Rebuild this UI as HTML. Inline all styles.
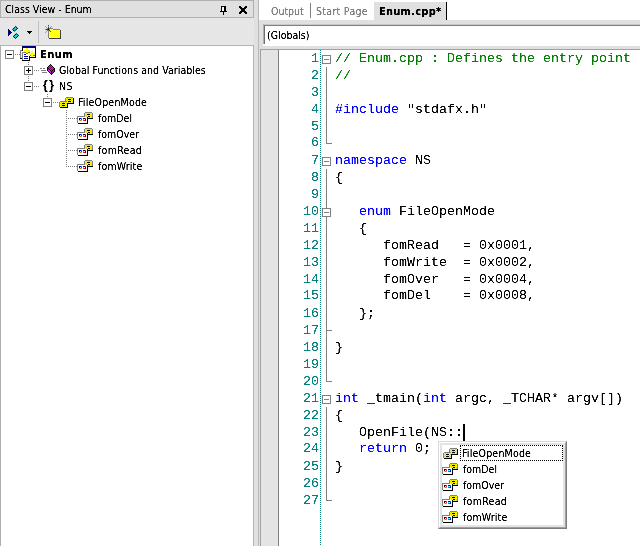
<!DOCTYPE html>
<html><head><meta charset="utf-8"><title>Enum</title>
<style>
html,body{margin:0;padding:0;}
body{width:640px;height:546px;overflow:hidden;background:#e0e0e0;position:relative;font-family:"DejaVu Sans Condensed","Liberation Sans",sans-serif;font-size:10.5px;color:#000;}
.abs{position:absolute;}
#w{position:absolute;left:0;top:0;width:640px;height:546px;will-change:transform;}
.row,.tab,.pi,#title span,#atab span,#combo span{filter:url(#ts);}
pre{filter:url(#th);}
#title{left:0;top:0;width:252px;height:16px;border:1px solid #b0b0b0;background:#e0e0e0;}
#title span{position:absolute;left:4px;top:1px;line-height:14px;white-space:nowrap;}
#toolbar{left:0;top:18px;width:254px;height:27px;background:#e6e6e6;}
#tree{left:1px;top:46px;width:252px;height:500px;background:#fff;}
#treetop{left:0;top:45px;width:254px;height:1px;background:#b4b4b4;}
#treeright{left:253px;top:45px;width:1px;height:501px;background:#b4b4b4;}
#lborder{left:0;top:45px;width:1px;height:501px;background:#b0b0b0;}
.row{position:absolute;height:16px;line-height:16px;white-space:nowrap;}
.box{position:absolute;width:7px;height:7px;border:1px solid #808080;background:#fff;}
.box i{position:absolute;left:1px;top:3px;width:5px;height:1px;background:#000;}
.box b{position:absolute;left:3px;top:1px;width:1px;height:5px;background:#000;}
.fbox{position:absolute;width:7px;height:7px;border:1px solid #808080;background:#fff;}
.fbox i{position:absolute;left:1px;top:3px;width:5px;height:1px;background:#808080;}
.fl{position:absolute;background:#808080;}
.hd{position:absolute;height:1px;background-image:repeating-linear-gradient(90deg,#808080 0 1px,transparent 1px 2px);}
.vd{position:absolute;width:1px;background-image:repeating-linear-gradient(180deg,#808080 0 1px,transparent 1px 2px);}
#split{left:254px;top:0;width:4px;height:546px;background:#e0e0e0;}
#splitline{left:258px;top:0;width:1px;height:546px;background:#b8b8b8;}
#tabs{left:259px;top:0;width:381px;height:20px;background:#fff;}
.tab{position:absolute;top:4px;line-height:14px;color:#808080;white-space:nowrap;}
#atab{left:374px;top:2px;width:72px;height:18px;background:#e0e0e0;border-right:1px solid #000;box-sizing:content-box;}
#atab span{position:absolute;left:5px;top:3px;letter-spacing:0.25px;line-height:14px;font-weight:bold;font-size:11px;color:#000;white-space:nowrap;}
#combo{left:263px;top:24px;width:377px;height:22px;background:#fff;}
#combo:before{content:"";position:absolute;left:0;top:0;right:0;bottom:2px;border-top:1px solid #c8c8c8;border-left:1px solid #b0b0b0;}
#combo:after{content:"";position:absolute;left:1px;top:1px;right:0;bottom:2px;border-top:1px solid #808080;border-left:1px solid #707070;}
#combo span{position:absolute;left:4px;top:4px;line-height:14px;white-space:nowrap;}
#code{left:260px;top:49px;width:380px;height:497px;background:#fff;border-top:1px solid #a0a0a0;border-left:1px solid #a0a0a0;box-sizing:border-box;}
#margin{left:261px;top:50px;width:17px;height:496px;background:#e4e4e4;border-right:1px solid #808080;}
pre{margin:0;font-family:"Liberation Mono","DejaVu Sans Mono",monospace;font-size:13.33px;line-height:18.8889px;transform:scaleY(0.9);transform-origin:0 0;}
#nums{left:278px;top:51px;width:41px;text-align:right;color:#008080;}
#src{left:335px;top:51px;color:#000;}
.k{color:#0000ff}.c{color:#008000}
#dot{left:320px;top:50px;width:1px;height:496px;background-image:repeating-linear-gradient(180deg,#008080 0 1px,transparent 1px 2px);}
#caret{left:463px;top:424px;width:2px;height:17px;background:#000;}
#popup{left:438px;top:441px;width:129px;height:88px;box-sizing:border-box;background:#fff;border:1px solid #d8d8d8;border-right-color:#7c7c7c;border-bottom-color:#7c7c7c;}
#popup:before{content:"";position:absolute;left:0;top:0;right:0;bottom:0;border:1px solid #fff;border-right-color:#a0a0a0;border-bottom-color:#a0a0a0;}
#popup:after{content:"";position:absolute;left:1px;top:1px;right:1px;bottom:1px;border:2px solid #e4e4e4;}
.pi{position:absolute;left:463px;height:16px;line-height:16px;white-space:nowrap;}
#focus{left:460px;top:445px;width:103px;height:16px;box-sizing:border-box;border:1px dotted #000;}
svg{position:absolute;overflow:visible;shape-rendering:crispEdges;}
</style></head><body>
<svg width="0" height="0" style="position:absolute;left:0;top:0"><filter id="th" x="0" y="0" width="1" height="1" color-interpolation-filters="sRGB"><feComponentTransfer><feFuncA type="table" tableValues="0 0 0.7 1 1"/></feComponentTransfer></filter><filter id="ts" x="0" y="0" width="1" height="1" color-interpolation-filters="sRGB"><feComponentTransfer><feFuncA type="table" tableValues="0 0.1 0.8 1 1"/></feComponentTransfer></filter></svg>
<div id="w">
<div id="toolbar" class="abs"></div>
<div id="title" class="abs"><span>Class View - Enum</span></div>
<div id="lborder" class="abs"></div>
<div id="treetop" class="abs"></div>
<div id="tree" class="abs"></div>
<div id="treeright" class="abs"></div>

<svg style="left:220px;top:6px" width="7" height="9" viewBox="0 0 7 9"><rect x="1" y="0" width="5" height="1" fill="#000"/><rect x="1" y="1" width="1" height="1" fill="#000"/><rect x="2" y="1" width="2" height="1" fill="#fff"/><rect x="4" y="1" width="2" height="1" fill="#000"/><rect x="1" y="2" width="1" height="1" fill="#000"/><rect x="2" y="2" width="2" height="1" fill="#fff"/><rect x="4" y="2" width="2" height="1" fill="#000"/><rect x="1" y="3" width="1" height="1" fill="#000"/><rect x="2" y="3" width="2" height="1" fill="#fff"/><rect x="4" y="3" width="2" height="1" fill="#000"/><rect x="1" y="4" width="1" height="1" fill="#000"/><rect x="2" y="4" width="2" height="1" fill="#fff"/><rect x="4" y="4" width="2" height="1" fill="#000"/><rect x="0" y="5" width="7" height="1" fill="#000"/><rect x="3" y="6" width="1" height="1" fill="#000"/><rect x="3" y="7" width="1" height="1" fill="#000"/><rect x="3" y="8" width="1" height="1" fill="#000"/></svg>
<svg style="left:239px;top:6px" width="8" height="8" viewBox="0 0 8 8"><rect x="0" y="0" width="2" height="1" fill="#000"/><rect x="6" y="0" width="2" height="1" fill="#000"/><rect x="0" y="1" width="3" height="1" fill="#000"/><rect x="5" y="1" width="3" height="1" fill="#000"/><rect x="1" y="2" width="6" height="1" fill="#000"/><rect x="2" y="3" width="4" height="1" fill="#000"/><rect x="2" y="4" width="4" height="1" fill="#000"/><rect x="1" y="5" width="6" height="1" fill="#000"/><rect x="0" y="6" width="3" height="1" fill="#000"/><rect x="5" y="6" width="3" height="1" fill="#000"/><rect x="0" y="7" width="2" height="1" fill="#000"/><rect x="6" y="7" width="2" height="1" fill="#000"/></svg>
<svg style="left:8px;top:29px" width="4" height="7" viewBox="0 0 4 7"><rect x="0" y="0" width="1" height="1" fill="#000080"/><rect x="0" y="1" width="2" height="1" fill="#000080"/><rect x="0" y="2" width="3" height="1" fill="#000080"/><rect x="0" y="3" width="4" height="1" fill="#000080"/><rect x="0" y="4" width="3" height="1" fill="#000080"/><rect x="0" y="5" width="2" height="1" fill="#000080"/><rect x="0" y="6" width="1" height="1" fill="#000080"/></svg>
<svg style="left:0;top:0;shape-rendering:auto" width="40" height="46"><polygon points="15.7,26.5 17.6,28.4 14.3,31.2 12.6,29.5" fill="#00e0e8" stroke="#000" stroke-width="1"/><polygon points="16.3,33.6 18.6,35.6 15.5,38.4 13.3,36.5" fill="#00e0e8" stroke="#000" stroke-width="1"/></svg>
<svg style="left:27px;top:31px" width="5" height="3" viewBox="0 0 5 3"><rect x="0" y="0" width="5" height="1" fill="#000"/><rect x="1" y="1" width="3" height="1" fill="#000"/><rect x="2" y="2" width="1" height="1" fill="#000"/></svg>
<div class="abs" style="left:38px;top:21px;width:1px;height:22px;background:#c0c0c0"></div>
<svg style="left:45px;top:25px" width="16" height="14" viewBox="0 0 16 14"><rect x="3" y="0" width="1" height="1" fill="#404040"/><rect x="0" y="1" width="1" height="1" fill="#a0a0a0"/><rect x="3" y="1" width="1" height="1" fill="#a0a0a0"/><rect x="6" y="1" width="1" height="1" fill="#a0a0a0"/><rect x="1" y="2" width="1" height="1" fill="#a0a0a0"/><rect x="3" y="2" width="1" height="1" fill="#404040"/><rect x="5" y="2" width="1" height="1" fill="#808080"/><rect x="2" y="3" width="1" height="1" fill="#808080"/><rect x="3" y="3" width="1" height="1" fill="#404040"/><rect x="4" y="3" width="4" height="1" fill="#808080"/><rect x="0" y="4" width="1" height="1" fill="#808080"/><rect x="1" y="4" width="2" height="1" fill="#404040"/><rect x="3" y="4" width="1" height="1" fill="#000"/><rect x="4" y="4" width="1" height="1" fill="#808080"/><rect x="5" y="4" width="1" height="1" fill="#fff"/><rect x="6" y="4" width="1" height="1" fill="#ffff00"/><rect x="7" y="4" width="1" height="1" fill="#fff"/><rect x="8" y="4" width="7" height="1" fill="#808080"/><rect x="2" y="5" width="2" height="1" fill="#808080"/><rect x="4" y="5" width="1" height="1" fill="#404040"/><rect x="5" y="5" width="1" height="1" fill="#ffff00"/><rect x="6" y="5" width="1" height="1" fill="#fff"/><rect x="7" y="5" width="1" height="1" fill="#ffff00"/><rect x="8" y="5" width="1" height="1" fill="#fff"/><rect x="9" y="5" width="1" height="1" fill="#ffff00"/><rect x="10" y="5" width="1" height="1" fill="#fff"/><rect x="11" y="5" width="1" height="1" fill="#ffff00"/><rect x="12" y="5" width="1" height="1" fill="#fff"/><rect x="13" y="5" width="1" height="1" fill="#ffff00"/><rect x="14" y="5" width="1" height="1" fill="#fff"/><rect x="15" y="5" width="1" height="1" fill="#404040"/><rect x="1" y="6" width="1" height="1" fill="#a0a0a0"/><rect x="3" y="6" width="1" height="1" fill="#808080"/><rect x="4" y="6" width="1" height="1" fill="#ffff00"/><rect x="5" y="6" width="1" height="1" fill="#404040"/><rect x="6" y="6" width="1" height="1" fill="#ffff00"/><rect x="7" y="6" width="1" height="1" fill="#fff"/><rect x="8" y="6" width="1" height="1" fill="#ffff00"/><rect x="9" y="6" width="1" height="1" fill="#fff"/><rect x="10" y="6" width="1" height="1" fill="#ffff00"/><rect x="11" y="6" width="1" height="1" fill="#fff"/><rect x="12" y="6" width="1" height="1" fill="#ffff00"/><rect x="13" y="6" width="1" height="1" fill="#fff"/><rect x="14" y="6" width="1" height="1" fill="#ffff00"/><rect x="15" y="6" width="1" height="1" fill="#404040"/><rect x="0" y="7" width="1" height="1" fill="#a0a0a0"/><rect x="3" y="7" width="1" height="1" fill="#808080"/><rect x="4" y="7" width="1" height="1" fill="#fff"/><rect x="5" y="7" width="1" height="1" fill="#ffff00"/><rect x="6" y="7" width="1" height="1" fill="#fff"/><rect x="7" y="7" width="1" height="1" fill="#ffff00"/><rect x="8" y="7" width="1" height="1" fill="#fff"/><rect x="9" y="7" width="1" height="1" fill="#ffff00"/><rect x="10" y="7" width="1" height="1" fill="#fff"/><rect x="11" y="7" width="1" height="1" fill="#ffff00"/><rect x="12" y="7" width="1" height="1" fill="#fff"/><rect x="13" y="7" width="1" height="1" fill="#ffff00"/><rect x="14" y="7" width="1" height="1" fill="#fff"/><rect x="15" y="7" width="1" height="1" fill="#404040"/><rect x="3" y="8" width="1" height="1" fill="#808080"/><rect x="4" y="8" width="1" height="1" fill="#ffff00"/><rect x="5" y="8" width="1" height="1" fill="#fff"/><rect x="6" y="8" width="1" height="1" fill="#ffff00"/><rect x="7" y="8" width="1" height="1" fill="#fff"/><rect x="8" y="8" width="1" height="1" fill="#ffff00"/><rect x="9" y="8" width="1" height="1" fill="#fff"/><rect x="10" y="8" width="1" height="1" fill="#ffff00"/><rect x="11" y="8" width="1" height="1" fill="#fff"/><rect x="12" y="8" width="1" height="1" fill="#ffff00"/><rect x="13" y="8" width="1" height="1" fill="#fff"/><rect x="14" y="8" width="1" height="1" fill="#ffff00"/><rect x="15" y="8" width="1" height="1" fill="#404040"/><rect x="3" y="9" width="1" height="1" fill="#808080"/><rect x="4" y="9" width="1" height="1" fill="#fff"/><rect x="5" y="9" width="1" height="1" fill="#ffff00"/><rect x="6" y="9" width="1" height="1" fill="#fff"/><rect x="7" y="9" width="1" height="1" fill="#ffff00"/><rect x="8" y="9" width="1" height="1" fill="#fff"/><rect x="9" y="9" width="1" height="1" fill="#ffff00"/><rect x="10" y="9" width="1" height="1" fill="#fff"/><rect x="11" y="9" width="1" height="1" fill="#ffff00"/><rect x="12" y="9" width="1" height="1" fill="#fff"/><rect x="13" y="9" width="1" height="1" fill="#ffff00"/><rect x="14" y="9" width="1" height="1" fill="#fff"/><rect x="15" y="9" width="1" height="1" fill="#404040"/><rect x="3" y="10" width="1" height="1" fill="#808080"/><rect x="4" y="10" width="1" height="1" fill="#ffff00"/><rect x="5" y="10" width="1" height="1" fill="#fff"/><rect x="6" y="10" width="1" height="1" fill="#ffff00"/><rect x="7" y="10" width="1" height="1" fill="#fff"/><rect x="8" y="10" width="1" height="1" fill="#ffff00"/><rect x="9" y="10" width="1" height="1" fill="#fff"/><rect x="10" y="10" width="1" height="1" fill="#ffff00"/><rect x="11" y="10" width="1" height="1" fill="#fff"/><rect x="12" y="10" width="1" height="1" fill="#ffff00"/><rect x="13" y="10" width="1" height="1" fill="#fff"/><rect x="14" y="10" width="1" height="1" fill="#ffff00"/><rect x="15" y="10" width="1" height="1" fill="#404040"/><rect x="3" y="11" width="1" height="1" fill="#808080"/><rect x="4" y="11" width="1" height="1" fill="#fff"/><rect x="5" y="11" width="1" height="1" fill="#ffff00"/><rect x="6" y="11" width="1" height="1" fill="#fff"/><rect x="7" y="11" width="1" height="1" fill="#ffff00"/><rect x="8" y="11" width="1" height="1" fill="#fff"/><rect x="9" y="11" width="1" height="1" fill="#ffff00"/><rect x="10" y="11" width="1" height="1" fill="#fff"/><rect x="11" y="11" width="1" height="1" fill="#ffff00"/><rect x="12" y="11" width="1" height="1" fill="#fff"/><rect x="13" y="11" width="1" height="1" fill="#ffff00"/><rect x="14" y="11" width="1" height="1" fill="#fff"/><rect x="15" y="11" width="1" height="1" fill="#404040"/><rect x="3" y="12" width="1" height="1" fill="#808080"/><rect x="4" y="12" width="1" height="1" fill="#ffff00"/><rect x="5" y="12" width="1" height="1" fill="#fff"/><rect x="6" y="12" width="1" height="1" fill="#ffff00"/><rect x="7" y="12" width="1" height="1" fill="#fff"/><rect x="8" y="12" width="1" height="1" fill="#ffff00"/><rect x="9" y="12" width="1" height="1" fill="#fff"/><rect x="10" y="12" width="1" height="1" fill="#ffff00"/><rect x="11" y="12" width="1" height="1" fill="#fff"/><rect x="12" y="12" width="1" height="1" fill="#ffff00"/><rect x="13" y="12" width="1" height="1" fill="#fff"/><rect x="14" y="12" width="1" height="1" fill="#ffff00"/><rect x="15" y="12" width="1" height="1" fill="#404040"/><rect x="4" y="13" width="12" height="1" fill="#404040"/></svg>

<div class="hd" style="left:15px;top:54px;width:5px"></div>
<div class="vd" style="left:28px;top:62px;height:20px"></div>
<div class="hd" style="left:34px;top:70px;width:5px"></div>
<div class="hd" style="left:34px;top:86px;width:5px"></div>
<div class="vd" style="left:47px;top:94px;height:4px"></div>
<div class="hd" style="left:53px;top:102px;width:5px"></div>
<div class="vd" style="left:66px;top:110px;height:57px"></div>
<div class="hd" style="left:66px;top:118px;width:11px"></div>
<div class="hd" style="left:66px;top:134px;width:11px"></div>
<div class="hd" style="left:66px;top:150px;width:11px"></div>
<div class="hd" style="left:66px;top:166px;width:11px"></div>

<div class="box" style="left:5px;top:50px"><i></i></div><div class="box" style="left:24px;top:66px"><i></i><b></b></div><div class="box" style="left:24px;top:82px"><i></i></div><div class="box" style="left:43px;top:98px"><i></i></div>
<svg style="left:20px;top:46px" width="16" height="15" viewBox="0 0 16 15"><rect x="2" y="0" width="14" height="1" fill="#000080"/><rect x="2" y="1" width="14" height="1" fill="#000080"/><rect x="2" y="2" width="1" height="1" fill="#000"/><rect x="3" y="2" width="3" height="1" fill="#fff"/><rect x="6" y="2" width="2" height="1" fill="#ffff00"/><rect x="8" y="2" width="7" height="1" fill="#fff"/><rect x="15" y="2" width="1" height="1" fill="#000"/><rect x="2" y="3" width="1" height="1" fill="#000"/><rect x="3" y="3" width="3" height="1" fill="#fff"/><rect x="6" y="3" width="2" height="1" fill="#ffff00"/><rect x="8" y="3" width="7" height="1" fill="#fff"/><rect x="15" y="3" width="1" height="1" fill="#000"/><rect x="0" y="4" width="2" height="1" fill="#808080"/><rect x="2" y="4" width="1" height="1" fill="#000"/><rect x="3" y="4" width="1" height="1" fill="#fff"/><rect x="4" y="4" width="6" height="1" fill="#ffff00"/><rect x="10" y="4" width="5" height="1" fill="#fff"/><rect x="15" y="4" width="1" height="1" fill="#000"/><rect x="0" y="5" width="1" height="1" fill="#808080"/><rect x="1" y="5" width="1" height="1" fill="#ffff00"/><rect x="2" y="5" width="2" height="1" fill="#fff"/><rect x="4" y="5" width="6" height="1" fill="#ffff00"/><rect x="10" y="5" width="1" height="1" fill="#fff"/><rect x="11" y="5" width="2" height="1" fill="#ffff00"/><rect x="13" y="5" width="2" height="1" fill="#fff"/><rect x="15" y="5" width="1" height="1" fill="#000"/><rect x="0" y="6" width="1" height="1" fill="#808080"/><rect x="1" y="6" width="1" height="1" fill="#fff"/><rect x="2" y="6" width="3" height="1" fill="#808080"/><rect x="5" y="6" width="1" height="1" fill="#808000"/><rect x="6" y="6" width="2" height="1" fill="#ffff00"/><rect x="8" y="6" width="2" height="1" fill="#808000"/><rect x="10" y="6" width="1" height="1" fill="#fff"/><rect x="11" y="6" width="2" height="1" fill="#ffff00"/><rect x="13" y="6" width="2" height="1" fill="#fff"/><rect x="15" y="6" width="1" height="1" fill="#000"/><rect x="0" y="7" width="1" height="1" fill="#808080"/><rect x="1" y="7" width="1" height="1" fill="#ffff00"/><rect x="2" y="7" width="1" height="1" fill="#808080"/><rect x="3" y="7" width="3" height="1" fill="#fff"/><rect x="6" y="7" width="2" height="1" fill="#808000"/><rect x="8" y="7" width="1" height="1" fill="#fff"/><rect x="9" y="7" width="6" height="1" fill="#ffff00"/><rect x="15" y="7" width="1" height="1" fill="#000"/><rect x="0" y="8" width="1" height="1" fill="#808080"/><rect x="1" y="8" width="1" height="1" fill="#fff"/><rect x="2" y="8" width="1" height="1" fill="#808080"/><rect x="3" y="8" width="1" height="1" fill="#fff"/><rect x="4" y="8" width="2" height="1" fill="#0000a0"/><rect x="6" y="8" width="3" height="1" fill="#fff"/><rect x="9" y="8" width="6" height="1" fill="#ffff00"/><rect x="15" y="8" width="1" height="1" fill="#000"/><rect x="0" y="9" width="1" height="1" fill="#808080"/><rect x="1" y="9" width="1" height="1" fill="#ffff00"/><rect x="2" y="9" width="1" height="1" fill="#808080"/><rect x="3" y="9" width="7" height="1" fill="#fff"/><rect x="10" y="9" width="1" height="1" fill="#808000"/><rect x="11" y="9" width="2" height="1" fill="#ffff00"/><rect x="13" y="9" width="2" height="1" fill="#808000"/><rect x="15" y="9" width="1" height="1" fill="#000"/><rect x="0" y="10" width="1" height="1" fill="#808080"/><rect x="1" y="10" width="1" height="1" fill="#fff"/><rect x="2" y="10" width="1" height="1" fill="#808080"/><rect x="3" y="10" width="1" height="1" fill="#fff"/><rect x="4" y="10" width="4" height="1" fill="#0000a0"/><rect x="8" y="10" width="1" height="1" fill="#fff"/><rect x="9" y="10" width="1" height="1" fill="#000"/><rect x="10" y="10" width="1" height="1" fill="#fff"/><rect x="11" y="10" width="2" height="1" fill="#ffff00"/><rect x="13" y="10" width="2" height="1" fill="#fff"/><rect x="15" y="10" width="1" height="1" fill="#000"/><rect x="0" y="11" width="1" height="1" fill="#808080"/><rect x="1" y="11" width="1" height="1" fill="#ffff00"/><rect x="2" y="11" width="1" height="1" fill="#808080"/><rect x="3" y="11" width="6" height="1" fill="#fff"/><rect x="9" y="11" width="7" height="1" fill="#000"/><rect x="0" y="12" width="2" height="1" fill="#000"/><rect x="2" y="12" width="1" height="1" fill="#808080"/><rect x="3" y="12" width="1" height="1" fill="#fff"/><rect x="4" y="12" width="4" height="1" fill="#0000a0"/><rect x="8" y="12" width="1" height="1" fill="#fff"/><rect x="9" y="12" width="1" height="1" fill="#000"/><rect x="2" y="13" width="1" height="1" fill="#808080"/><rect x="3" y="13" width="6" height="1" fill="#fff"/><rect x="9" y="13" width="1" height="1" fill="#000"/><rect x="2" y="14" width="8" height="1" fill="#000"/></svg>
<div class="hd" style="left:40px;top:68px;width:1px"></div>
<svg style="left:40px;top:68px" width="7" height="5" viewBox="0 0 7 5"><rect x="0" y="0" width="2" height="1" fill="#808080"/><rect x="3" y="0" width="2" height="1" fill="#808080"/><rect x="1" y="2" width="5" height="1" fill="#808080"/><rect x="2" y="4" width="5" height="1" fill="#808080"/></svg>
<svg style="left:47px;top:64px" width="8" height="11" viewBox="0 0 8 11"><rect x="3" y="0" width="1" height="1" fill="#000"/><rect x="2" y="1" width="1" height="1" fill="#000"/><rect x="3" y="1" width="1" height="1" fill="#ff00ff"/><rect x="4" y="1" width="1" height="1" fill="#000"/><rect x="1" y="2" width="1" height="1" fill="#000"/><rect x="2" y="2" width="1" height="1" fill="#ff00ff"/><rect x="3" y="2" width="1" height="1" fill="#800080"/><rect x="4" y="2" width="1" height="1" fill="#ff00ff"/><rect x="5" y="2" width="1" height="1" fill="#000"/><rect x="0" y="3" width="1" height="1" fill="#000"/><rect x="1" y="3" width="1" height="1" fill="#ff00ff"/><rect x="2" y="3" width="1" height="1" fill="#800080"/><rect x="3" y="3" width="1" height="1" fill="#ff00ff"/><rect x="4" y="3" width="1" height="1" fill="#800080"/><rect x="5" y="3" width="1" height="1" fill="#ff00ff"/><rect x="6" y="3" width="1" height="1" fill="#000"/><rect x="0" y="4" width="2" height="1" fill="#000"/><rect x="2" y="4" width="1" height="1" fill="#ff00ff"/><rect x="3" y="4" width="1" height="1" fill="#800080"/><rect x="4" y="4" width="1" height="1" fill="#ff00ff"/><rect x="5" y="4" width="1" height="1" fill="#800080"/><rect x="6" y="4" width="1" height="1" fill="#ff00ff"/><rect x="7" y="4" width="1" height="1" fill="#000"/><rect x="0" y="5" width="1" height="1" fill="#000"/><rect x="1" y="5" width="1" height="1" fill="#ff00ff"/><rect x="2" y="5" width="1" height="1" fill="#000"/><rect x="3" y="5" width="1" height="1" fill="#ff00ff"/><rect x="4" y="5" width="1" height="1" fill="#800080"/><rect x="5" y="5" width="1" height="1" fill="#ff00ff"/><rect x="6" y="5" width="2" height="1" fill="#000"/><rect x="0" y="6" width="1" height="1" fill="#000"/><rect x="1" y="6" width="2" height="1" fill="#ff00ff"/><rect x="3" y="6" width="1" height="1" fill="#000"/><rect x="4" y="6" width="1" height="1" fill="#ff00ff"/><rect x="5" y="6" width="1" height="1" fill="#000"/><rect x="6" y="6" width="1" height="1" fill="#c000c0"/><rect x="7" y="6" width="1" height="1" fill="#000"/><rect x="1" y="7" width="1" height="1" fill="#000"/><rect x="2" y="7" width="2" height="1" fill="#ff00ff"/><rect x="4" y="7" width="1" height="1" fill="#000"/><rect x="5" y="7" width="2" height="1" fill="#c000c0"/><rect x="7" y="7" width="1" height="1" fill="#000"/><rect x="2" y="8" width="1" height="1" fill="#000"/><rect x="3" y="8" width="1" height="1" fill="#ff00ff"/><rect x="4" y="8" width="1" height="1" fill="#000"/><rect x="5" y="8" width="1" height="1" fill="#c000c0"/><rect x="6" y="8" width="1" height="1" fill="#000"/><rect x="3" y="9" width="3" height="1" fill="#000"/><rect x="4" y="10" width="1" height="1" fill="#000"/></svg>
<div class="row" style="left:43px;top:77px;font-weight:bold;font-size:12px;letter-spacing:1.5px;font-family:'Liberation Sans',sans-serif">{}</div>
<svg style="left:59px;top:97px" width="15" height="11" viewBox="0 0 15 11"><rect x="7" y="0" width="7" height="1" fill="#808080"/><rect x="6" y="1" width="1" height="1" fill="#808080"/><rect x="7" y="1" width="1" height="1" fill="#ffff00"/><rect x="8" y="1" width="1" height="1" fill="#d0d070"/><rect x="9" y="1" width="1" height="1" fill="#ffff00"/><rect x="10" y="1" width="1" height="1" fill="#d0d070"/><rect x="11" y="1" width="1" height="1" fill="#ffff00"/><rect x="12" y="1" width="1" height="1" fill="#d0d070"/><rect x="13" y="1" width="1" height="1" fill="#ffff00"/><rect x="14" y="1" width="1" height="1" fill="#000"/><rect x="6" y="2" width="1" height="1" fill="#808080"/><rect x="7" y="2" width="1" height="1" fill="#d0d070"/><rect x="8" y="2" width="1" height="1" fill="#ffff00"/><rect x="9" y="2" width="3" height="1" fill="#000"/><rect x="12" y="2" width="1" height="1" fill="#ffff00"/><rect x="13" y="2" width="1" height="1" fill="#d0d070"/><rect x="14" y="2" width="1" height="1" fill="#000"/><rect x="6" y="3" width="1" height="1" fill="#808080"/><rect x="7" y="3" width="1" height="1" fill="#ffff00"/><rect x="8" y="3" width="1" height="1" fill="#d0d070"/><rect x="9" y="3" width="1" height="1" fill="#ffff00"/><rect x="10" y="3" width="1" height="1" fill="#d0d070"/><rect x="11" y="3" width="1" height="1" fill="#ffff00"/><rect x="12" y="3" width="1" height="1" fill="#d0d070"/><rect x="13" y="3" width="1" height="1" fill="#ffff00"/><rect x="14" y="3" width="1" height="1" fill="#000"/><rect x="1" y="4" width="7" height="1" fill="#808080"/><rect x="8" y="4" width="1" height="1" fill="#ffff00"/><rect x="9" y="4" width="3" height="1" fill="#000"/><rect x="12" y="4" width="1" height="1" fill="#ffff00"/><rect x="13" y="4" width="1" height="1" fill="#d0d070"/><rect x="14" y="4" width="1" height="1" fill="#000"/><rect x="0" y="5" width="1" height="1" fill="#808080"/><rect x="1" y="5" width="1" height="1" fill="#ffff00"/><rect x="2" y="5" width="1" height="1" fill="#d0d070"/><rect x="3" y="5" width="1" height="1" fill="#ffff00"/><rect x="4" y="5" width="1" height="1" fill="#d0d070"/><rect x="5" y="5" width="1" height="1" fill="#ffff00"/><rect x="6" y="5" width="1" height="1" fill="#d0d070"/><rect x="7" y="5" width="2" height="1" fill="#ffff00"/><rect x="9" y="5" width="1" height="1" fill="#d0d070"/><rect x="10" y="5" width="1" height="1" fill="#ffff00"/><rect x="11" y="5" width="1" height="1" fill="#d0d070"/><rect x="12" y="5" width="1" height="1" fill="#ffff00"/><rect x="13" y="5" width="1" height="1" fill="#d0d070"/><rect x="14" y="5" width="1" height="1" fill="#000"/><rect x="0" y="6" width="1" height="1" fill="#808080"/><rect x="1" y="6" width="1" height="1" fill="#d0d070"/><rect x="2" y="6" width="1" height="1" fill="#ffff00"/><rect x="3" y="6" width="3" height="1" fill="#000"/><rect x="6" y="6" width="1" height="1" fill="#ffff00"/><rect x="7" y="6" width="1" height="1" fill="#d0d070"/><rect x="8" y="6" width="7" height="1" fill="#000"/><rect x="0" y="7" width="1" height="1" fill="#808080"/><rect x="1" y="7" width="1" height="1" fill="#ffff00"/><rect x="2" y="7" width="1" height="1" fill="#d0d070"/><rect x="3" y="7" width="1" height="1" fill="#ffff00"/><rect x="4" y="7" width="1" height="1" fill="#d0d070"/><rect x="5" y="7" width="1" height="1" fill="#ffff00"/><rect x="6" y="7" width="1" height="1" fill="#d0d070"/><rect x="7" y="7" width="1" height="1" fill="#ffff00"/><rect x="8" y="7" width="1" height="1" fill="#000"/><rect x="0" y="8" width="1" height="1" fill="#808080"/><rect x="1" y="8" width="1" height="1" fill="#d0d070"/><rect x="2" y="8" width="1" height="1" fill="#ffff00"/><rect x="3" y="8" width="3" height="1" fill="#000"/><rect x="6" y="8" width="1" height="1" fill="#ffff00"/><rect x="7" y="8" width="1" height="1" fill="#d0d070"/><rect x="8" y="8" width="1" height="1" fill="#000"/><rect x="0" y="9" width="1" height="1" fill="#808080"/><rect x="1" y="9" width="1" height="1" fill="#ffff00"/><rect x="2" y="9" width="1" height="1" fill="#d0d070"/><rect x="3" y="9" width="1" height="1" fill="#ffff00"/><rect x="4" y="9" width="1" height="1" fill="#d0d070"/><rect x="5" y="9" width="1" height="1" fill="#ffff00"/><rect x="6" y="9" width="1" height="1" fill="#d0d070"/><rect x="7" y="9" width="1" height="1" fill="#ffff00"/><rect x="8" y="9" width="1" height="1" fill="#000"/><rect x="1" y="10" width="8" height="1" fill="#000"/></svg>
<svg style="left:77px;top:112px" width="16" height="12" viewBox="0 0 16 12"><rect x="8" y="0" width="7" height="1" fill="#808080"/><rect x="7" y="1" width="1" height="1" fill="#808080"/><rect x="8" y="1" width="1" height="1" fill="#ffff00"/><rect x="9" y="1" width="1" height="1" fill="#d0d070"/><rect x="10" y="1" width="1" height="1" fill="#ffff00"/><rect x="11" y="1" width="1" height="1" fill="#d0d070"/><rect x="12" y="1" width="1" height="1" fill="#ffff00"/><rect x="13" y="1" width="1" height="1" fill="#d0d070"/><rect x="14" y="1" width="1" height="1" fill="#ffff00"/><rect x="15" y="1" width="1" height="1" fill="#808080"/><rect x="7" y="2" width="1" height="1" fill="#808080"/><rect x="8" y="2" width="1" height="1" fill="#d0d070"/><rect x="9" y="2" width="1" height="1" fill="#ffff00"/><rect x="10" y="2" width="3" height="1" fill="#000"/><rect x="13" y="2" width="1" height="1" fill="#ffff00"/><rect x="14" y="2" width="1" height="1" fill="#d0d070"/><rect x="15" y="2" width="1" height="1" fill="#808080"/><rect x="7" y="3" width="1" height="1" fill="#808080"/><rect x="8" y="3" width="1" height="1" fill="#ffff00"/><rect x="9" y="3" width="1" height="1" fill="#d0d070"/><rect x="10" y="3" width="1" height="1" fill="#ffff00"/><rect x="11" y="3" width="1" height="1" fill="#d0d070"/><rect x="12" y="3" width="1" height="1" fill="#ffff00"/><rect x="13" y="3" width="1" height="1" fill="#d0d070"/><rect x="14" y="3" width="1" height="1" fill="#ffff00"/><rect x="15" y="3" width="1" height="1" fill="#808080"/><rect x="0" y="4" width="8" height="1" fill="#808080"/><rect x="8" y="4" width="1" height="1" fill="#ffff00"/><rect x="9" y="4" width="1" height="1" fill="#d0d070"/><rect x="10" y="4" width="1" height="1" fill="#ffff00"/><rect x="11" y="4" width="2" height="1" fill="#000"/><rect x="13" y="4" width="1" height="1" fill="#ffff00"/><rect x="14" y="4" width="1" height="1" fill="#d0d070"/><rect x="15" y="4" width="1" height="1" fill="#808080"/><rect x="0" y="5" width="1" height="1" fill="#808080"/><rect x="1" y="5" width="9" height="1" fill="#fff"/><rect x="10" y="5" width="1" height="1" fill="#000"/><rect x="11" y="5" width="1" height="1" fill="#ffff00"/><rect x="12" y="5" width="1" height="1" fill="#d0d070"/><rect x="13" y="5" width="1" height="1" fill="#ffff00"/><rect x="14" y="5" width="1" height="1" fill="#d0d070"/><rect x="15" y="5" width="1" height="1" fill="#808080"/><rect x="0" y="6" width="1" height="1" fill="#808080"/><rect x="1" y="6" width="1" height="1" fill="#fff"/><rect x="2" y="6" width="1" height="1" fill="#000"/><rect x="3" y="6" width="1" height="1" fill="#0000ff"/><rect x="4" y="6" width="1" height="1" fill="#ff00ff"/><rect x="5" y="6" width="1" height="1" fill="#fff"/><rect x="6" y="6" width="1" height="1" fill="#0000ff"/><rect x="7" y="6" width="1" height="1" fill="#000"/><rect x="8" y="6" width="1" height="1" fill="#ff00ff"/><rect x="9" y="6" width="1" height="1" fill="#fff"/><rect x="10" y="6" width="6" height="1" fill="#000"/><rect x="0" y="7" width="1" height="1" fill="#808080"/><rect x="1" y="7" width="1" height="1" fill="#fff"/><rect x="2" y="7" width="1" height="1" fill="#000"/><rect x="3" y="7" width="1" height="1" fill="#fff"/><rect x="4" y="7" width="1" height="1" fill="#ff0000"/><rect x="5" y="7" width="1" height="1" fill="#fff"/><rect x="6" y="7" width="1" height="1" fill="#00ffff"/><rect x="7" y="7" width="1" height="1" fill="#fff"/><rect x="8" y="7" width="1" height="1" fill="#0000ff"/><rect x="9" y="7" width="1" height="1" fill="#fff"/><rect x="10" y="7" width="1" height="1" fill="#000"/><rect x="0" y="8" width="1" height="1" fill="#808080"/><rect x="1" y="8" width="1" height="1" fill="#fff"/><rect x="2" y="8" width="1" height="1" fill="#00ffff"/><rect x="3" y="8" width="1" height="1" fill="#808000"/><rect x="4" y="8" width="1" height="1" fill="#00ffff"/><rect x="5" y="8" width="1" height="1" fill="#fff"/><rect x="6" y="8" width="1" height="1" fill="#ff00ff"/><rect x="7" y="8" width="1" height="1" fill="#ff0000"/><rect x="8" y="8" width="1" height="1" fill="#0000ff"/><rect x="9" y="8" width="1" height="1" fill="#fff"/><rect x="10" y="8" width="1" height="1" fill="#000"/><rect x="0" y="9" width="1" height="1" fill="#808080"/><rect x="1" y="9" width="9" height="1" fill="#fff"/><rect x="10" y="9" width="1" height="1" fill="#000"/><rect x="0" y="10" width="1" height="1" fill="#808080"/><rect x="1" y="10" width="9" height="1" fill="#fff"/><rect x="10" y="10" width="1" height="1" fill="#000"/><rect x="1" y="11" width="10" height="1" fill="#000"/></svg>
<svg style="left:77px;top:128px" width="16" height="12" viewBox="0 0 16 12"><rect x="8" y="0" width="7" height="1" fill="#808080"/><rect x="7" y="1" width="1" height="1" fill="#808080"/><rect x="8" y="1" width="1" height="1" fill="#ffff00"/><rect x="9" y="1" width="1" height="1" fill="#d0d070"/><rect x="10" y="1" width="1" height="1" fill="#ffff00"/><rect x="11" y="1" width="1" height="1" fill="#d0d070"/><rect x="12" y="1" width="1" height="1" fill="#ffff00"/><rect x="13" y="1" width="1" height="1" fill="#d0d070"/><rect x="14" y="1" width="1" height="1" fill="#ffff00"/><rect x="15" y="1" width="1" height="1" fill="#808080"/><rect x="7" y="2" width="1" height="1" fill="#808080"/><rect x="8" y="2" width="1" height="1" fill="#d0d070"/><rect x="9" y="2" width="1" height="1" fill="#ffff00"/><rect x="10" y="2" width="3" height="1" fill="#000"/><rect x="13" y="2" width="1" height="1" fill="#ffff00"/><rect x="14" y="2" width="1" height="1" fill="#d0d070"/><rect x="15" y="2" width="1" height="1" fill="#808080"/><rect x="7" y="3" width="1" height="1" fill="#808080"/><rect x="8" y="3" width="1" height="1" fill="#ffff00"/><rect x="9" y="3" width="1" height="1" fill="#d0d070"/><rect x="10" y="3" width="1" height="1" fill="#ffff00"/><rect x="11" y="3" width="1" height="1" fill="#d0d070"/><rect x="12" y="3" width="1" height="1" fill="#ffff00"/><rect x="13" y="3" width="1" height="1" fill="#d0d070"/><rect x="14" y="3" width="1" height="1" fill="#ffff00"/><rect x="15" y="3" width="1" height="1" fill="#808080"/><rect x="0" y="4" width="8" height="1" fill="#808080"/><rect x="8" y="4" width="1" height="1" fill="#ffff00"/><rect x="9" y="4" width="1" height="1" fill="#d0d070"/><rect x="10" y="4" width="1" height="1" fill="#ffff00"/><rect x="11" y="4" width="2" height="1" fill="#000"/><rect x="13" y="4" width="1" height="1" fill="#ffff00"/><rect x="14" y="4" width="1" height="1" fill="#d0d070"/><rect x="15" y="4" width="1" height="1" fill="#808080"/><rect x="0" y="5" width="1" height="1" fill="#808080"/><rect x="1" y="5" width="9" height="1" fill="#fff"/><rect x="10" y="5" width="1" height="1" fill="#000"/><rect x="11" y="5" width="1" height="1" fill="#ffff00"/><rect x="12" y="5" width="1" height="1" fill="#d0d070"/><rect x="13" y="5" width="1" height="1" fill="#ffff00"/><rect x="14" y="5" width="1" height="1" fill="#d0d070"/><rect x="15" y="5" width="1" height="1" fill="#808080"/><rect x="0" y="6" width="1" height="1" fill="#808080"/><rect x="1" y="6" width="1" height="1" fill="#fff"/><rect x="2" y="6" width="1" height="1" fill="#000"/><rect x="3" y="6" width="1" height="1" fill="#0000ff"/><rect x="4" y="6" width="1" height="1" fill="#ff00ff"/><rect x="5" y="6" width="1" height="1" fill="#fff"/><rect x="6" y="6" width="1" height="1" fill="#0000ff"/><rect x="7" y="6" width="1" height="1" fill="#000"/><rect x="8" y="6" width="1" height="1" fill="#ff00ff"/><rect x="9" y="6" width="1" height="1" fill="#fff"/><rect x="10" y="6" width="6" height="1" fill="#000"/><rect x="0" y="7" width="1" height="1" fill="#808080"/><rect x="1" y="7" width="1" height="1" fill="#fff"/><rect x="2" y="7" width="1" height="1" fill="#000"/><rect x="3" y="7" width="1" height="1" fill="#fff"/><rect x="4" y="7" width="1" height="1" fill="#ff0000"/><rect x="5" y="7" width="1" height="1" fill="#fff"/><rect x="6" y="7" width="1" height="1" fill="#00ffff"/><rect x="7" y="7" width="1" height="1" fill="#fff"/><rect x="8" y="7" width="1" height="1" fill="#0000ff"/><rect x="9" y="7" width="1" height="1" fill="#fff"/><rect x="10" y="7" width="1" height="1" fill="#000"/><rect x="0" y="8" width="1" height="1" fill="#808080"/><rect x="1" y="8" width="1" height="1" fill="#fff"/><rect x="2" y="8" width="1" height="1" fill="#00ffff"/><rect x="3" y="8" width="1" height="1" fill="#808000"/><rect x="4" y="8" width="1" height="1" fill="#00ffff"/><rect x="5" y="8" width="1" height="1" fill="#fff"/><rect x="6" y="8" width="1" height="1" fill="#ff00ff"/><rect x="7" y="8" width="1" height="1" fill="#ff0000"/><rect x="8" y="8" width="1" height="1" fill="#0000ff"/><rect x="9" y="8" width="1" height="1" fill="#fff"/><rect x="10" y="8" width="1" height="1" fill="#000"/><rect x="0" y="9" width="1" height="1" fill="#808080"/><rect x="1" y="9" width="9" height="1" fill="#fff"/><rect x="10" y="9" width="1" height="1" fill="#000"/><rect x="0" y="10" width="1" height="1" fill="#808080"/><rect x="1" y="10" width="9" height="1" fill="#fff"/><rect x="10" y="10" width="1" height="1" fill="#000"/><rect x="1" y="11" width="10" height="1" fill="#000"/></svg>
<svg style="left:77px;top:144px" width="16" height="12" viewBox="0 0 16 12"><rect x="8" y="0" width="7" height="1" fill="#808080"/><rect x="7" y="1" width="1" height="1" fill="#808080"/><rect x="8" y="1" width="1" height="1" fill="#ffff00"/><rect x="9" y="1" width="1" height="1" fill="#d0d070"/><rect x="10" y="1" width="1" height="1" fill="#ffff00"/><rect x="11" y="1" width="1" height="1" fill="#d0d070"/><rect x="12" y="1" width="1" height="1" fill="#ffff00"/><rect x="13" y="1" width="1" height="1" fill="#d0d070"/><rect x="14" y="1" width="1" height="1" fill="#ffff00"/><rect x="15" y="1" width="1" height="1" fill="#808080"/><rect x="7" y="2" width="1" height="1" fill="#808080"/><rect x="8" y="2" width="1" height="1" fill="#d0d070"/><rect x="9" y="2" width="1" height="1" fill="#ffff00"/><rect x="10" y="2" width="3" height="1" fill="#000"/><rect x="13" y="2" width="1" height="1" fill="#ffff00"/><rect x="14" y="2" width="1" height="1" fill="#d0d070"/><rect x="15" y="2" width="1" height="1" fill="#808080"/><rect x="7" y="3" width="1" height="1" fill="#808080"/><rect x="8" y="3" width="1" height="1" fill="#ffff00"/><rect x="9" y="3" width="1" height="1" fill="#d0d070"/><rect x="10" y="3" width="1" height="1" fill="#ffff00"/><rect x="11" y="3" width="1" height="1" fill="#d0d070"/><rect x="12" y="3" width="1" height="1" fill="#ffff00"/><rect x="13" y="3" width="1" height="1" fill="#d0d070"/><rect x="14" y="3" width="1" height="1" fill="#ffff00"/><rect x="15" y="3" width="1" height="1" fill="#808080"/><rect x="0" y="4" width="8" height="1" fill="#808080"/><rect x="8" y="4" width="1" height="1" fill="#ffff00"/><rect x="9" y="4" width="1" height="1" fill="#d0d070"/><rect x="10" y="4" width="1" height="1" fill="#ffff00"/><rect x="11" y="4" width="2" height="1" fill="#000"/><rect x="13" y="4" width="1" height="1" fill="#ffff00"/><rect x="14" y="4" width="1" height="1" fill="#d0d070"/><rect x="15" y="4" width="1" height="1" fill="#808080"/><rect x="0" y="5" width="1" height="1" fill="#808080"/><rect x="1" y="5" width="9" height="1" fill="#fff"/><rect x="10" y="5" width="1" height="1" fill="#000"/><rect x="11" y="5" width="1" height="1" fill="#ffff00"/><rect x="12" y="5" width="1" height="1" fill="#d0d070"/><rect x="13" y="5" width="1" height="1" fill="#ffff00"/><rect x="14" y="5" width="1" height="1" fill="#d0d070"/><rect x="15" y="5" width="1" height="1" fill="#808080"/><rect x="0" y="6" width="1" height="1" fill="#808080"/><rect x="1" y="6" width="1" height="1" fill="#fff"/><rect x="2" y="6" width="1" height="1" fill="#000"/><rect x="3" y="6" width="1" height="1" fill="#0000ff"/><rect x="4" y="6" width="1" height="1" fill="#ff00ff"/><rect x="5" y="6" width="1" height="1" fill="#fff"/><rect x="6" y="6" width="1" height="1" fill="#0000ff"/><rect x="7" y="6" width="1" height="1" fill="#000"/><rect x="8" y="6" width="1" height="1" fill="#ff00ff"/><rect x="9" y="6" width="1" height="1" fill="#fff"/><rect x="10" y="6" width="6" height="1" fill="#000"/><rect x="0" y="7" width="1" height="1" fill="#808080"/><rect x="1" y="7" width="1" height="1" fill="#fff"/><rect x="2" y="7" width="1" height="1" fill="#000"/><rect x="3" y="7" width="1" height="1" fill="#fff"/><rect x="4" y="7" width="1" height="1" fill="#ff0000"/><rect x="5" y="7" width="1" height="1" fill="#fff"/><rect x="6" y="7" width="1" height="1" fill="#00ffff"/><rect x="7" y="7" width="1" height="1" fill="#fff"/><rect x="8" y="7" width="1" height="1" fill="#0000ff"/><rect x="9" y="7" width="1" height="1" fill="#fff"/><rect x="10" y="7" width="1" height="1" fill="#000"/><rect x="0" y="8" width="1" height="1" fill="#808080"/><rect x="1" y="8" width="1" height="1" fill="#fff"/><rect x="2" y="8" width="1" height="1" fill="#00ffff"/><rect x="3" y="8" width="1" height="1" fill="#808000"/><rect x="4" y="8" width="1" height="1" fill="#00ffff"/><rect x="5" y="8" width="1" height="1" fill="#fff"/><rect x="6" y="8" width="1" height="1" fill="#ff00ff"/><rect x="7" y="8" width="1" height="1" fill="#ff0000"/><rect x="8" y="8" width="1" height="1" fill="#0000ff"/><rect x="9" y="8" width="1" height="1" fill="#fff"/><rect x="10" y="8" width="1" height="1" fill="#000"/><rect x="0" y="9" width="1" height="1" fill="#808080"/><rect x="1" y="9" width="9" height="1" fill="#fff"/><rect x="10" y="9" width="1" height="1" fill="#000"/><rect x="0" y="10" width="1" height="1" fill="#808080"/><rect x="1" y="10" width="9" height="1" fill="#fff"/><rect x="10" y="10" width="1" height="1" fill="#000"/><rect x="1" y="11" width="10" height="1" fill="#000"/></svg>
<svg style="left:77px;top:160px" width="16" height="12" viewBox="0 0 16 12"><rect x="8" y="0" width="7" height="1" fill="#808080"/><rect x="7" y="1" width="1" height="1" fill="#808080"/><rect x="8" y="1" width="1" height="1" fill="#ffff00"/><rect x="9" y="1" width="1" height="1" fill="#d0d070"/><rect x="10" y="1" width="1" height="1" fill="#ffff00"/><rect x="11" y="1" width="1" height="1" fill="#d0d070"/><rect x="12" y="1" width="1" height="1" fill="#ffff00"/><rect x="13" y="1" width="1" height="1" fill="#d0d070"/><rect x="14" y="1" width="1" height="1" fill="#ffff00"/><rect x="15" y="1" width="1" height="1" fill="#808080"/><rect x="7" y="2" width="1" height="1" fill="#808080"/><rect x="8" y="2" width="1" height="1" fill="#d0d070"/><rect x="9" y="2" width="1" height="1" fill="#ffff00"/><rect x="10" y="2" width="3" height="1" fill="#000"/><rect x="13" y="2" width="1" height="1" fill="#ffff00"/><rect x="14" y="2" width="1" height="1" fill="#d0d070"/><rect x="15" y="2" width="1" height="1" fill="#808080"/><rect x="7" y="3" width="1" height="1" fill="#808080"/><rect x="8" y="3" width="1" height="1" fill="#ffff00"/><rect x="9" y="3" width="1" height="1" fill="#d0d070"/><rect x="10" y="3" width="1" height="1" fill="#ffff00"/><rect x="11" y="3" width="1" height="1" fill="#d0d070"/><rect x="12" y="3" width="1" height="1" fill="#ffff00"/><rect x="13" y="3" width="1" height="1" fill="#d0d070"/><rect x="14" y="3" width="1" height="1" fill="#ffff00"/><rect x="15" y="3" width="1" height="1" fill="#808080"/><rect x="0" y="4" width="8" height="1" fill="#808080"/><rect x="8" y="4" width="1" height="1" fill="#ffff00"/><rect x="9" y="4" width="1" height="1" fill="#d0d070"/><rect x="10" y="4" width="1" height="1" fill="#ffff00"/><rect x="11" y="4" width="2" height="1" fill="#000"/><rect x="13" y="4" width="1" height="1" fill="#ffff00"/><rect x="14" y="4" width="1" height="1" fill="#d0d070"/><rect x="15" y="4" width="1" height="1" fill="#808080"/><rect x="0" y="5" width="1" height="1" fill="#808080"/><rect x="1" y="5" width="9" height="1" fill="#fff"/><rect x="10" y="5" width="1" height="1" fill="#000"/><rect x="11" y="5" width="1" height="1" fill="#ffff00"/><rect x="12" y="5" width="1" height="1" fill="#d0d070"/><rect x="13" y="5" width="1" height="1" fill="#ffff00"/><rect x="14" y="5" width="1" height="1" fill="#d0d070"/><rect x="15" y="5" width="1" height="1" fill="#808080"/><rect x="0" y="6" width="1" height="1" fill="#808080"/><rect x="1" y="6" width="1" height="1" fill="#fff"/><rect x="2" y="6" width="1" height="1" fill="#000"/><rect x="3" y="6" width="1" height="1" fill="#0000ff"/><rect x="4" y="6" width="1" height="1" fill="#ff00ff"/><rect x="5" y="6" width="1" height="1" fill="#fff"/><rect x="6" y="6" width="1" height="1" fill="#0000ff"/><rect x="7" y="6" width="1" height="1" fill="#000"/><rect x="8" y="6" width="1" height="1" fill="#ff00ff"/><rect x="9" y="6" width="1" height="1" fill="#fff"/><rect x="10" y="6" width="6" height="1" fill="#000"/><rect x="0" y="7" width="1" height="1" fill="#808080"/><rect x="1" y="7" width="1" height="1" fill="#fff"/><rect x="2" y="7" width="1" height="1" fill="#000"/><rect x="3" y="7" width="1" height="1" fill="#fff"/><rect x="4" y="7" width="1" height="1" fill="#ff0000"/><rect x="5" y="7" width="1" height="1" fill="#fff"/><rect x="6" y="7" width="1" height="1" fill="#00ffff"/><rect x="7" y="7" width="1" height="1" fill="#fff"/><rect x="8" y="7" width="1" height="1" fill="#0000ff"/><rect x="9" y="7" width="1" height="1" fill="#fff"/><rect x="10" y="7" width="1" height="1" fill="#000"/><rect x="0" y="8" width="1" height="1" fill="#808080"/><rect x="1" y="8" width="1" height="1" fill="#fff"/><rect x="2" y="8" width="1" height="1" fill="#00ffff"/><rect x="3" y="8" width="1" height="1" fill="#808000"/><rect x="4" y="8" width="1" height="1" fill="#00ffff"/><rect x="5" y="8" width="1" height="1" fill="#fff"/><rect x="6" y="8" width="1" height="1" fill="#ff00ff"/><rect x="7" y="8" width="1" height="1" fill="#ff0000"/><rect x="8" y="8" width="1" height="1" fill="#0000ff"/><rect x="9" y="8" width="1" height="1" fill="#fff"/><rect x="10" y="8" width="1" height="1" fill="#000"/><rect x="0" y="9" width="1" height="1" fill="#808080"/><rect x="1" y="9" width="9" height="1" fill="#fff"/><rect x="10" y="9" width="1" height="1" fill="#000"/><rect x="0" y="10" width="1" height="1" fill="#808080"/><rect x="1" y="10" width="9" height="1" fill="#fff"/><rect x="10" y="10" width="1" height="1" fill="#000"/><rect x="1" y="11" width="10" height="1" fill="#000"/></svg>

<div class="row" style="left:40px;top:47px;font-weight:bold;font-size:11px;letter-spacing:0.5px">Enum</div>
<div class="row" style="left:59px;top:62px;letter-spacing:0.06px">Global Functions and Variables</div>
<div class="row" style="left:59px;top:78px;letter-spacing:0.5px">NS</div>
<div class="row" style="left:78px;top:94px;letter-spacing:0.2px">FileOpenMode</div>
<div class="row" style="left:98px;top:110px">fomDel</div>
<div class="row" style="left:98px;top:126px">fomOver</div>
<div class="row" style="left:98px;top:142px;letter-spacing:0.3px">fomRead</div>
<div class="row" style="left:98px;top:158px;letter-spacing:0.15px">fomWrite</div>
<div id="split" class="abs"></div>
<div id="splitline" class="abs"></div>
<div id="tabs" class="abs"></div>
<div class="tab" style="left:271px">Output</div>
<div class="abs" style="left:310px;top:3px;width:1px;height:15px;background:#808080"></div>
<div class="tab" style="left:316px;letter-spacing:0.3px">Start Page</div>
<div id="atab" class="abs"><span>Enum.cpp*</span></div>
<div id="combo" class="abs"><span>(Globals)</span></div>
<div id="code" class="abs"></div>
<div id="margin" class="abs"></div>
<div id="dot" class="abs"></div>

<div class="fbox" style="left:322px;top:55px"><i></i></div><div class="fl" style="left:326px;top:67px;width:1px;height:77px"></div><div class="fl" style="left:326px;top:143px;width:6px;height:1px"></div><div class="fbox" style="left:322px;top:157px"><i></i></div><div class="fl" style="left:326px;top:169px;width:1px;height:213px"></div><div class="fl" style="left:326px;top:381px;width:6px;height:1px"></div><div class="fbox" style="left:322px;top:208px"><i></i></div><div class="fl" style="left:326px;top:330px;width:6px;height:1px"></div><div class="fbox" style="left:322px;top:395px"><i></i></div><div class="fl" style="left:326px;top:407px;width:1px;height:94px"></div><div class="fl" style="left:326px;top:500px;width:6px;height:1px"></div>
<pre id="nums" class="abs">1
2
3
4
5
6
7
8
9
10
11
12
13
14
15
16
17
18
19
20
21
22
23
24
25
26
27</pre>
<pre id="src" class="abs"><span class="c">// Enum.cpp : Defines the entry point for the console application.</span>
<span class="c">//</span>

<span class="k">#include</span> "stdafx.h"


<span class="k">namespace</span> NS
{

   <span class="k">enum</span> FileOpenMode
   {
      fomRead   = 0x0001,
      fomWrite  = 0x0002,
      fomOver   = 0x0004,
      fomDel    = 0x0008,
   };

}


<span class="k">int</span> _tmain(<span class="k">int</span> argc, _TCHAR* argv[])
{
   OpenFile(NS::
   <span class="k">return</span> 0;
}

</pre>
<div id="caret" class="abs"></div>
<div id="popup" class="abs"></div>
<div id="focus" class="abs"></div>

<svg style="left:443px;top:448px" width="15" height="11" viewBox="0 0 15 11"><rect x="7" y="0" width="7" height="1" fill="#808080"/><rect x="6" y="1" width="1" height="1" fill="#808080"/><rect x="7" y="1" width="1" height="1" fill="#ffff00"/><rect x="8" y="1" width="1" height="1" fill="#d0d070"/><rect x="9" y="1" width="1" height="1" fill="#ffff00"/><rect x="10" y="1" width="1" height="1" fill="#d0d070"/><rect x="11" y="1" width="1" height="1" fill="#ffff00"/><rect x="12" y="1" width="1" height="1" fill="#d0d070"/><rect x="13" y="1" width="1" height="1" fill="#ffff00"/><rect x="14" y="1" width="1" height="1" fill="#000"/><rect x="6" y="2" width="1" height="1" fill="#808080"/><rect x="7" y="2" width="1" height="1" fill="#d0d070"/><rect x="8" y="2" width="1" height="1" fill="#ffff00"/><rect x="9" y="2" width="3" height="1" fill="#000"/><rect x="12" y="2" width="1" height="1" fill="#ffff00"/><rect x="13" y="2" width="1" height="1" fill="#d0d070"/><rect x="14" y="2" width="1" height="1" fill="#000"/><rect x="6" y="3" width="1" height="1" fill="#808080"/><rect x="7" y="3" width="1" height="1" fill="#ffff00"/><rect x="8" y="3" width="1" height="1" fill="#d0d070"/><rect x="9" y="3" width="1" height="1" fill="#ffff00"/><rect x="10" y="3" width="1" height="1" fill="#d0d070"/><rect x="11" y="3" width="1" height="1" fill="#ffff00"/><rect x="12" y="3" width="1" height="1" fill="#d0d070"/><rect x="13" y="3" width="1" height="1" fill="#ffff00"/><rect x="14" y="3" width="1" height="1" fill="#000"/><rect x="1" y="4" width="7" height="1" fill="#808080"/><rect x="8" y="4" width="1" height="1" fill="#ffff00"/><rect x="9" y="4" width="3" height="1" fill="#000"/><rect x="12" y="4" width="1" height="1" fill="#ffff00"/><rect x="13" y="4" width="1" height="1" fill="#d0d070"/><rect x="14" y="4" width="1" height="1" fill="#000"/><rect x="0" y="5" width="1" height="1" fill="#808080"/><rect x="1" y="5" width="1" height="1" fill="#ffff00"/><rect x="2" y="5" width="1" height="1" fill="#d0d070"/><rect x="3" y="5" width="1" height="1" fill="#ffff00"/><rect x="4" y="5" width="1" height="1" fill="#d0d070"/><rect x="5" y="5" width="1" height="1" fill="#ffff00"/><rect x="6" y="5" width="1" height="1" fill="#d0d070"/><rect x="7" y="5" width="2" height="1" fill="#ffff00"/><rect x="9" y="5" width="1" height="1" fill="#d0d070"/><rect x="10" y="5" width="1" height="1" fill="#ffff00"/><rect x="11" y="5" width="1" height="1" fill="#d0d070"/><rect x="12" y="5" width="1" height="1" fill="#ffff00"/><rect x="13" y="5" width="1" height="1" fill="#d0d070"/><rect x="14" y="5" width="1" height="1" fill="#000"/><rect x="0" y="6" width="1" height="1" fill="#808080"/><rect x="1" y="6" width="1" height="1" fill="#d0d070"/><rect x="2" y="6" width="1" height="1" fill="#ffff00"/><rect x="3" y="6" width="3" height="1" fill="#000"/><rect x="6" y="6" width="1" height="1" fill="#ffff00"/><rect x="7" y="6" width="1" height="1" fill="#d0d070"/><rect x="8" y="6" width="7" height="1" fill="#000"/><rect x="0" y="7" width="1" height="1" fill="#808080"/><rect x="1" y="7" width="1" height="1" fill="#ffff00"/><rect x="2" y="7" width="1" height="1" fill="#d0d070"/><rect x="3" y="7" width="1" height="1" fill="#ffff00"/><rect x="4" y="7" width="1" height="1" fill="#d0d070"/><rect x="5" y="7" width="1" height="1" fill="#ffff00"/><rect x="6" y="7" width="1" height="1" fill="#d0d070"/><rect x="7" y="7" width="1" height="1" fill="#ffff00"/><rect x="8" y="7" width="1" height="1" fill="#000"/><rect x="0" y="8" width="1" height="1" fill="#808080"/><rect x="1" y="8" width="1" height="1" fill="#d0d070"/><rect x="2" y="8" width="1" height="1" fill="#ffff00"/><rect x="3" y="8" width="3" height="1" fill="#000"/><rect x="6" y="8" width="1" height="1" fill="#ffff00"/><rect x="7" y="8" width="1" height="1" fill="#d0d070"/><rect x="8" y="8" width="1" height="1" fill="#000"/><rect x="0" y="9" width="1" height="1" fill="#808080"/><rect x="1" y="9" width="1" height="1" fill="#ffff00"/><rect x="2" y="9" width="1" height="1" fill="#d0d070"/><rect x="3" y="9" width="1" height="1" fill="#ffff00"/><rect x="4" y="9" width="1" height="1" fill="#d0d070"/><rect x="5" y="9" width="1" height="1" fill="#ffff00"/><rect x="6" y="9" width="1" height="1" fill="#d0d070"/><rect x="7" y="9" width="1" height="1" fill="#ffff00"/><rect x="8" y="9" width="1" height="1" fill="#000"/><rect x="1" y="10" width="8" height="1" fill="#000"/></svg>
<div class="pi" style="left:462px;letter-spacing:0.2px;top:445px">FileOpenMode</div>
<svg style="left:442px;top:463px" width="16" height="12" viewBox="0 0 16 12"><rect x="8" y="0" width="7" height="1" fill="#808080"/><rect x="7" y="1" width="1" height="1" fill="#808080"/><rect x="8" y="1" width="1" height="1" fill="#ffff00"/><rect x="9" y="1" width="1" height="1" fill="#d0d070"/><rect x="10" y="1" width="1" height="1" fill="#ffff00"/><rect x="11" y="1" width="1" height="1" fill="#d0d070"/><rect x="12" y="1" width="1" height="1" fill="#ffff00"/><rect x="13" y="1" width="1" height="1" fill="#d0d070"/><rect x="14" y="1" width="1" height="1" fill="#ffff00"/><rect x="15" y="1" width="1" height="1" fill="#808080"/><rect x="7" y="2" width="1" height="1" fill="#808080"/><rect x="8" y="2" width="1" height="1" fill="#d0d070"/><rect x="9" y="2" width="1" height="1" fill="#ffff00"/><rect x="10" y="2" width="3" height="1" fill="#000"/><rect x="13" y="2" width="1" height="1" fill="#ffff00"/><rect x="14" y="2" width="1" height="1" fill="#d0d070"/><rect x="15" y="2" width="1" height="1" fill="#808080"/><rect x="7" y="3" width="1" height="1" fill="#808080"/><rect x="8" y="3" width="1" height="1" fill="#ffff00"/><rect x="9" y="3" width="1" height="1" fill="#d0d070"/><rect x="10" y="3" width="1" height="1" fill="#ffff00"/><rect x="11" y="3" width="1" height="1" fill="#d0d070"/><rect x="12" y="3" width="1" height="1" fill="#ffff00"/><rect x="13" y="3" width="1" height="1" fill="#d0d070"/><rect x="14" y="3" width="1" height="1" fill="#ffff00"/><rect x="15" y="3" width="1" height="1" fill="#808080"/><rect x="0" y="4" width="8" height="1" fill="#808080"/><rect x="8" y="4" width="1" height="1" fill="#ffff00"/><rect x="9" y="4" width="1" height="1" fill="#d0d070"/><rect x="10" y="4" width="1" height="1" fill="#ffff00"/><rect x="11" y="4" width="2" height="1" fill="#000"/><rect x="13" y="4" width="1" height="1" fill="#ffff00"/><rect x="14" y="4" width="1" height="1" fill="#d0d070"/><rect x="15" y="4" width="1" height="1" fill="#808080"/><rect x="0" y="5" width="1" height="1" fill="#808080"/><rect x="1" y="5" width="9" height="1" fill="#fff"/><rect x="10" y="5" width="1" height="1" fill="#000"/><rect x="11" y="5" width="1" height="1" fill="#ffff00"/><rect x="12" y="5" width="1" height="1" fill="#d0d070"/><rect x="13" y="5" width="1" height="1" fill="#ffff00"/><rect x="14" y="5" width="1" height="1" fill="#d0d070"/><rect x="15" y="5" width="1" height="1" fill="#808080"/><rect x="0" y="6" width="1" height="1" fill="#808080"/><rect x="1" y="6" width="1" height="1" fill="#fff"/><rect x="2" y="6" width="1" height="1" fill="#000"/><rect x="3" y="6" width="1" height="1" fill="#0000ff"/><rect x="4" y="6" width="1" height="1" fill="#ff00ff"/><rect x="5" y="6" width="1" height="1" fill="#fff"/><rect x="6" y="6" width="1" height="1" fill="#0000ff"/><rect x="7" y="6" width="1" height="1" fill="#000"/><rect x="8" y="6" width="1" height="1" fill="#ff00ff"/><rect x="9" y="6" width="1" height="1" fill="#fff"/><rect x="10" y="6" width="6" height="1" fill="#000"/><rect x="0" y="7" width="1" height="1" fill="#808080"/><rect x="1" y="7" width="1" height="1" fill="#fff"/><rect x="2" y="7" width="1" height="1" fill="#000"/><rect x="3" y="7" width="1" height="1" fill="#fff"/><rect x="4" y="7" width="1" height="1" fill="#ff0000"/><rect x="5" y="7" width="1" height="1" fill="#fff"/><rect x="6" y="7" width="1" height="1" fill="#00ffff"/><rect x="7" y="7" width="1" height="1" fill="#fff"/><rect x="8" y="7" width="1" height="1" fill="#0000ff"/><rect x="9" y="7" width="1" height="1" fill="#fff"/><rect x="10" y="7" width="1" height="1" fill="#000"/><rect x="0" y="8" width="1" height="1" fill="#808080"/><rect x="1" y="8" width="1" height="1" fill="#fff"/><rect x="2" y="8" width="1" height="1" fill="#00ffff"/><rect x="3" y="8" width="1" height="1" fill="#808000"/><rect x="4" y="8" width="1" height="1" fill="#00ffff"/><rect x="5" y="8" width="1" height="1" fill="#fff"/><rect x="6" y="8" width="1" height="1" fill="#ff00ff"/><rect x="7" y="8" width="1" height="1" fill="#ff0000"/><rect x="8" y="8" width="1" height="1" fill="#0000ff"/><rect x="9" y="8" width="1" height="1" fill="#fff"/><rect x="10" y="8" width="1" height="1" fill="#000"/><rect x="0" y="9" width="1" height="1" fill="#808080"/><rect x="1" y="9" width="9" height="1" fill="#fff"/><rect x="10" y="9" width="1" height="1" fill="#000"/><rect x="0" y="10" width="1" height="1" fill="#808080"/><rect x="1" y="10" width="9" height="1" fill="#fff"/><rect x="10" y="10" width="1" height="1" fill="#000"/><rect x="1" y="11" width="10" height="1" fill="#000"/></svg>
<div class="pi" style="top:461px">fomDel</div>
<svg style="left:442px;top:479px" width="16" height="12" viewBox="0 0 16 12"><rect x="8" y="0" width="7" height="1" fill="#808080"/><rect x="7" y="1" width="1" height="1" fill="#808080"/><rect x="8" y="1" width="1" height="1" fill="#ffff00"/><rect x="9" y="1" width="1" height="1" fill="#d0d070"/><rect x="10" y="1" width="1" height="1" fill="#ffff00"/><rect x="11" y="1" width="1" height="1" fill="#d0d070"/><rect x="12" y="1" width="1" height="1" fill="#ffff00"/><rect x="13" y="1" width="1" height="1" fill="#d0d070"/><rect x="14" y="1" width="1" height="1" fill="#ffff00"/><rect x="15" y="1" width="1" height="1" fill="#808080"/><rect x="7" y="2" width="1" height="1" fill="#808080"/><rect x="8" y="2" width="1" height="1" fill="#d0d070"/><rect x="9" y="2" width="1" height="1" fill="#ffff00"/><rect x="10" y="2" width="3" height="1" fill="#000"/><rect x="13" y="2" width="1" height="1" fill="#ffff00"/><rect x="14" y="2" width="1" height="1" fill="#d0d070"/><rect x="15" y="2" width="1" height="1" fill="#808080"/><rect x="7" y="3" width="1" height="1" fill="#808080"/><rect x="8" y="3" width="1" height="1" fill="#ffff00"/><rect x="9" y="3" width="1" height="1" fill="#d0d070"/><rect x="10" y="3" width="1" height="1" fill="#ffff00"/><rect x="11" y="3" width="1" height="1" fill="#d0d070"/><rect x="12" y="3" width="1" height="1" fill="#ffff00"/><rect x="13" y="3" width="1" height="1" fill="#d0d070"/><rect x="14" y="3" width="1" height="1" fill="#ffff00"/><rect x="15" y="3" width="1" height="1" fill="#808080"/><rect x="0" y="4" width="8" height="1" fill="#808080"/><rect x="8" y="4" width="1" height="1" fill="#ffff00"/><rect x="9" y="4" width="1" height="1" fill="#d0d070"/><rect x="10" y="4" width="1" height="1" fill="#ffff00"/><rect x="11" y="4" width="2" height="1" fill="#000"/><rect x="13" y="4" width="1" height="1" fill="#ffff00"/><rect x="14" y="4" width="1" height="1" fill="#d0d070"/><rect x="15" y="4" width="1" height="1" fill="#808080"/><rect x="0" y="5" width="1" height="1" fill="#808080"/><rect x="1" y="5" width="9" height="1" fill="#fff"/><rect x="10" y="5" width="1" height="1" fill="#000"/><rect x="11" y="5" width="1" height="1" fill="#ffff00"/><rect x="12" y="5" width="1" height="1" fill="#d0d070"/><rect x="13" y="5" width="1" height="1" fill="#ffff00"/><rect x="14" y="5" width="1" height="1" fill="#d0d070"/><rect x="15" y="5" width="1" height="1" fill="#808080"/><rect x="0" y="6" width="1" height="1" fill="#808080"/><rect x="1" y="6" width="1" height="1" fill="#fff"/><rect x="2" y="6" width="1" height="1" fill="#000"/><rect x="3" y="6" width="1" height="1" fill="#0000ff"/><rect x="4" y="6" width="1" height="1" fill="#ff00ff"/><rect x="5" y="6" width="1" height="1" fill="#fff"/><rect x="6" y="6" width="1" height="1" fill="#0000ff"/><rect x="7" y="6" width="1" height="1" fill="#000"/><rect x="8" y="6" width="1" height="1" fill="#ff00ff"/><rect x="9" y="6" width="1" height="1" fill="#fff"/><rect x="10" y="6" width="6" height="1" fill="#000"/><rect x="0" y="7" width="1" height="1" fill="#808080"/><rect x="1" y="7" width="1" height="1" fill="#fff"/><rect x="2" y="7" width="1" height="1" fill="#000"/><rect x="3" y="7" width="1" height="1" fill="#fff"/><rect x="4" y="7" width="1" height="1" fill="#ff0000"/><rect x="5" y="7" width="1" height="1" fill="#fff"/><rect x="6" y="7" width="1" height="1" fill="#00ffff"/><rect x="7" y="7" width="1" height="1" fill="#fff"/><rect x="8" y="7" width="1" height="1" fill="#0000ff"/><rect x="9" y="7" width="1" height="1" fill="#fff"/><rect x="10" y="7" width="1" height="1" fill="#000"/><rect x="0" y="8" width="1" height="1" fill="#808080"/><rect x="1" y="8" width="1" height="1" fill="#fff"/><rect x="2" y="8" width="1" height="1" fill="#00ffff"/><rect x="3" y="8" width="1" height="1" fill="#808000"/><rect x="4" y="8" width="1" height="1" fill="#00ffff"/><rect x="5" y="8" width="1" height="1" fill="#fff"/><rect x="6" y="8" width="1" height="1" fill="#ff00ff"/><rect x="7" y="8" width="1" height="1" fill="#ff0000"/><rect x="8" y="8" width="1" height="1" fill="#0000ff"/><rect x="9" y="8" width="1" height="1" fill="#fff"/><rect x="10" y="8" width="1" height="1" fill="#000"/><rect x="0" y="9" width="1" height="1" fill="#808080"/><rect x="1" y="9" width="9" height="1" fill="#fff"/><rect x="10" y="9" width="1" height="1" fill="#000"/><rect x="0" y="10" width="1" height="1" fill="#808080"/><rect x="1" y="10" width="9" height="1" fill="#fff"/><rect x="10" y="10" width="1" height="1" fill="#000"/><rect x="1" y="11" width="10" height="1" fill="#000"/></svg>
<div class="pi" style="top:477px">fomOver</div>
<svg style="left:442px;top:495px" width="16" height="12" viewBox="0 0 16 12"><rect x="8" y="0" width="7" height="1" fill="#808080"/><rect x="7" y="1" width="1" height="1" fill="#808080"/><rect x="8" y="1" width="1" height="1" fill="#ffff00"/><rect x="9" y="1" width="1" height="1" fill="#d0d070"/><rect x="10" y="1" width="1" height="1" fill="#ffff00"/><rect x="11" y="1" width="1" height="1" fill="#d0d070"/><rect x="12" y="1" width="1" height="1" fill="#ffff00"/><rect x="13" y="1" width="1" height="1" fill="#d0d070"/><rect x="14" y="1" width="1" height="1" fill="#ffff00"/><rect x="15" y="1" width="1" height="1" fill="#808080"/><rect x="7" y="2" width="1" height="1" fill="#808080"/><rect x="8" y="2" width="1" height="1" fill="#d0d070"/><rect x="9" y="2" width="1" height="1" fill="#ffff00"/><rect x="10" y="2" width="3" height="1" fill="#000"/><rect x="13" y="2" width="1" height="1" fill="#ffff00"/><rect x="14" y="2" width="1" height="1" fill="#d0d070"/><rect x="15" y="2" width="1" height="1" fill="#808080"/><rect x="7" y="3" width="1" height="1" fill="#808080"/><rect x="8" y="3" width="1" height="1" fill="#ffff00"/><rect x="9" y="3" width="1" height="1" fill="#d0d070"/><rect x="10" y="3" width="1" height="1" fill="#ffff00"/><rect x="11" y="3" width="1" height="1" fill="#d0d070"/><rect x="12" y="3" width="1" height="1" fill="#ffff00"/><rect x="13" y="3" width="1" height="1" fill="#d0d070"/><rect x="14" y="3" width="1" height="1" fill="#ffff00"/><rect x="15" y="3" width="1" height="1" fill="#808080"/><rect x="0" y="4" width="8" height="1" fill="#808080"/><rect x="8" y="4" width="1" height="1" fill="#ffff00"/><rect x="9" y="4" width="1" height="1" fill="#d0d070"/><rect x="10" y="4" width="1" height="1" fill="#ffff00"/><rect x="11" y="4" width="2" height="1" fill="#000"/><rect x="13" y="4" width="1" height="1" fill="#ffff00"/><rect x="14" y="4" width="1" height="1" fill="#d0d070"/><rect x="15" y="4" width="1" height="1" fill="#808080"/><rect x="0" y="5" width="1" height="1" fill="#808080"/><rect x="1" y="5" width="9" height="1" fill="#fff"/><rect x="10" y="5" width="1" height="1" fill="#000"/><rect x="11" y="5" width="1" height="1" fill="#ffff00"/><rect x="12" y="5" width="1" height="1" fill="#d0d070"/><rect x="13" y="5" width="1" height="1" fill="#ffff00"/><rect x="14" y="5" width="1" height="1" fill="#d0d070"/><rect x="15" y="5" width="1" height="1" fill="#808080"/><rect x="0" y="6" width="1" height="1" fill="#808080"/><rect x="1" y="6" width="1" height="1" fill="#fff"/><rect x="2" y="6" width="1" height="1" fill="#000"/><rect x="3" y="6" width="1" height="1" fill="#0000ff"/><rect x="4" y="6" width="1" height="1" fill="#ff00ff"/><rect x="5" y="6" width="1" height="1" fill="#fff"/><rect x="6" y="6" width="1" height="1" fill="#0000ff"/><rect x="7" y="6" width="1" height="1" fill="#000"/><rect x="8" y="6" width="1" height="1" fill="#ff00ff"/><rect x="9" y="6" width="1" height="1" fill="#fff"/><rect x="10" y="6" width="6" height="1" fill="#000"/><rect x="0" y="7" width="1" height="1" fill="#808080"/><rect x="1" y="7" width="1" height="1" fill="#fff"/><rect x="2" y="7" width="1" height="1" fill="#000"/><rect x="3" y="7" width="1" height="1" fill="#fff"/><rect x="4" y="7" width="1" height="1" fill="#ff0000"/><rect x="5" y="7" width="1" height="1" fill="#fff"/><rect x="6" y="7" width="1" height="1" fill="#00ffff"/><rect x="7" y="7" width="1" height="1" fill="#fff"/><rect x="8" y="7" width="1" height="1" fill="#0000ff"/><rect x="9" y="7" width="1" height="1" fill="#fff"/><rect x="10" y="7" width="1" height="1" fill="#000"/><rect x="0" y="8" width="1" height="1" fill="#808080"/><rect x="1" y="8" width="1" height="1" fill="#fff"/><rect x="2" y="8" width="1" height="1" fill="#00ffff"/><rect x="3" y="8" width="1" height="1" fill="#808000"/><rect x="4" y="8" width="1" height="1" fill="#00ffff"/><rect x="5" y="8" width="1" height="1" fill="#fff"/><rect x="6" y="8" width="1" height="1" fill="#ff00ff"/><rect x="7" y="8" width="1" height="1" fill="#ff0000"/><rect x="8" y="8" width="1" height="1" fill="#0000ff"/><rect x="9" y="8" width="1" height="1" fill="#fff"/><rect x="10" y="8" width="1" height="1" fill="#000"/><rect x="0" y="9" width="1" height="1" fill="#808080"/><rect x="1" y="9" width="9" height="1" fill="#fff"/><rect x="10" y="9" width="1" height="1" fill="#000"/><rect x="0" y="10" width="1" height="1" fill="#808080"/><rect x="1" y="10" width="9" height="1" fill="#fff"/><rect x="10" y="10" width="1" height="1" fill="#000"/><rect x="1" y="11" width="10" height="1" fill="#000"/></svg>
<div class="pi" style="letter-spacing:0.3px;top:493px">fomRead</div>
<svg style="left:442px;top:511px" width="16" height="12" viewBox="0 0 16 12"><rect x="8" y="0" width="7" height="1" fill="#808080"/><rect x="7" y="1" width="1" height="1" fill="#808080"/><rect x="8" y="1" width="1" height="1" fill="#ffff00"/><rect x="9" y="1" width="1" height="1" fill="#d0d070"/><rect x="10" y="1" width="1" height="1" fill="#ffff00"/><rect x="11" y="1" width="1" height="1" fill="#d0d070"/><rect x="12" y="1" width="1" height="1" fill="#ffff00"/><rect x="13" y="1" width="1" height="1" fill="#d0d070"/><rect x="14" y="1" width="1" height="1" fill="#ffff00"/><rect x="15" y="1" width="1" height="1" fill="#808080"/><rect x="7" y="2" width="1" height="1" fill="#808080"/><rect x="8" y="2" width="1" height="1" fill="#d0d070"/><rect x="9" y="2" width="1" height="1" fill="#ffff00"/><rect x="10" y="2" width="3" height="1" fill="#000"/><rect x="13" y="2" width="1" height="1" fill="#ffff00"/><rect x="14" y="2" width="1" height="1" fill="#d0d070"/><rect x="15" y="2" width="1" height="1" fill="#808080"/><rect x="7" y="3" width="1" height="1" fill="#808080"/><rect x="8" y="3" width="1" height="1" fill="#ffff00"/><rect x="9" y="3" width="1" height="1" fill="#d0d070"/><rect x="10" y="3" width="1" height="1" fill="#ffff00"/><rect x="11" y="3" width="1" height="1" fill="#d0d070"/><rect x="12" y="3" width="1" height="1" fill="#ffff00"/><rect x="13" y="3" width="1" height="1" fill="#d0d070"/><rect x="14" y="3" width="1" height="1" fill="#ffff00"/><rect x="15" y="3" width="1" height="1" fill="#808080"/><rect x="0" y="4" width="8" height="1" fill="#808080"/><rect x="8" y="4" width="1" height="1" fill="#ffff00"/><rect x="9" y="4" width="1" height="1" fill="#d0d070"/><rect x="10" y="4" width="1" height="1" fill="#ffff00"/><rect x="11" y="4" width="2" height="1" fill="#000"/><rect x="13" y="4" width="1" height="1" fill="#ffff00"/><rect x="14" y="4" width="1" height="1" fill="#d0d070"/><rect x="15" y="4" width="1" height="1" fill="#808080"/><rect x="0" y="5" width="1" height="1" fill="#808080"/><rect x="1" y="5" width="9" height="1" fill="#fff"/><rect x="10" y="5" width="1" height="1" fill="#000"/><rect x="11" y="5" width="1" height="1" fill="#ffff00"/><rect x="12" y="5" width="1" height="1" fill="#d0d070"/><rect x="13" y="5" width="1" height="1" fill="#ffff00"/><rect x="14" y="5" width="1" height="1" fill="#d0d070"/><rect x="15" y="5" width="1" height="1" fill="#808080"/><rect x="0" y="6" width="1" height="1" fill="#808080"/><rect x="1" y="6" width="1" height="1" fill="#fff"/><rect x="2" y="6" width="1" height="1" fill="#000"/><rect x="3" y="6" width="1" height="1" fill="#0000ff"/><rect x="4" y="6" width="1" height="1" fill="#ff00ff"/><rect x="5" y="6" width="1" height="1" fill="#fff"/><rect x="6" y="6" width="1" height="1" fill="#0000ff"/><rect x="7" y="6" width="1" height="1" fill="#000"/><rect x="8" y="6" width="1" height="1" fill="#ff00ff"/><rect x="9" y="6" width="1" height="1" fill="#fff"/><rect x="10" y="6" width="6" height="1" fill="#000"/><rect x="0" y="7" width="1" height="1" fill="#808080"/><rect x="1" y="7" width="1" height="1" fill="#fff"/><rect x="2" y="7" width="1" height="1" fill="#000"/><rect x="3" y="7" width="1" height="1" fill="#fff"/><rect x="4" y="7" width="1" height="1" fill="#ff0000"/><rect x="5" y="7" width="1" height="1" fill="#fff"/><rect x="6" y="7" width="1" height="1" fill="#00ffff"/><rect x="7" y="7" width="1" height="1" fill="#fff"/><rect x="8" y="7" width="1" height="1" fill="#0000ff"/><rect x="9" y="7" width="1" height="1" fill="#fff"/><rect x="10" y="7" width="1" height="1" fill="#000"/><rect x="0" y="8" width="1" height="1" fill="#808080"/><rect x="1" y="8" width="1" height="1" fill="#fff"/><rect x="2" y="8" width="1" height="1" fill="#00ffff"/><rect x="3" y="8" width="1" height="1" fill="#808000"/><rect x="4" y="8" width="1" height="1" fill="#00ffff"/><rect x="5" y="8" width="1" height="1" fill="#fff"/><rect x="6" y="8" width="1" height="1" fill="#ff00ff"/><rect x="7" y="8" width="1" height="1" fill="#ff0000"/><rect x="8" y="8" width="1" height="1" fill="#0000ff"/><rect x="9" y="8" width="1" height="1" fill="#fff"/><rect x="10" y="8" width="1" height="1" fill="#000"/><rect x="0" y="9" width="1" height="1" fill="#808080"/><rect x="1" y="9" width="9" height="1" fill="#fff"/><rect x="10" y="9" width="1" height="1" fill="#000"/><rect x="0" y="10" width="1" height="1" fill="#808080"/><rect x="1" y="10" width="9" height="1" fill="#fff"/><rect x="10" y="10" width="1" height="1" fill="#000"/><rect x="1" y="11" width="10" height="1" fill="#000"/></svg>
<div class="pi" style="letter-spacing:0.15px;top:509px">fomWrite</div>
</div></body></html>
